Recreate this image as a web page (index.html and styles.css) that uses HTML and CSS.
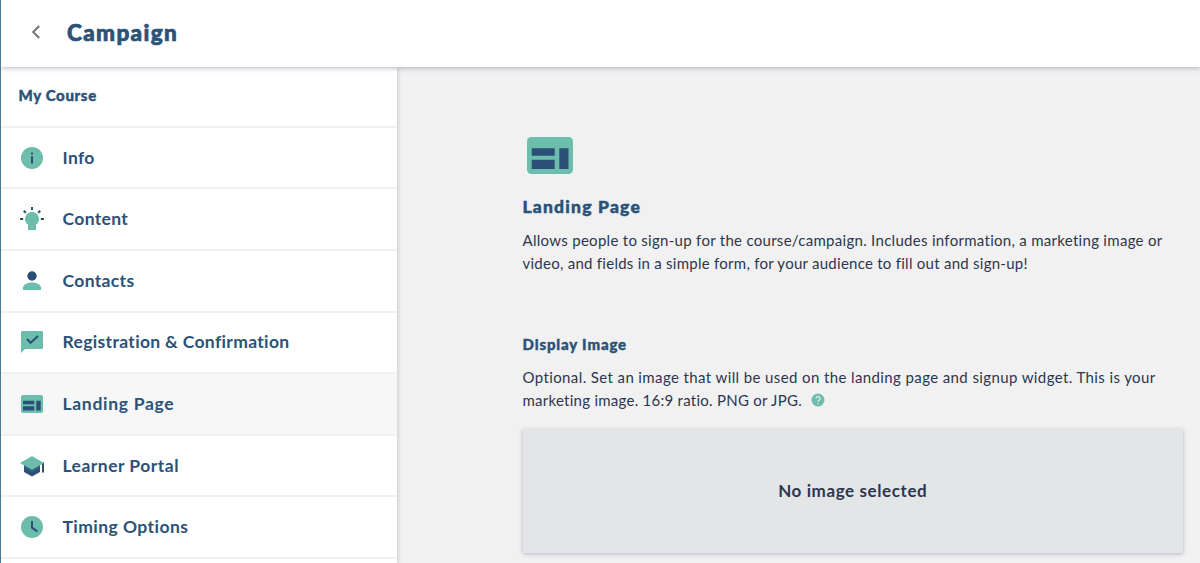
FILE: index.html
```html
<!DOCTYPE html>
<html lang="en">
<head>
    <meta charset="UTF-8">
    <meta name="viewport" content="width=device-width, initial-scale=1.0">
    <title>Campaign</title>
    <link rel="stylesheet" href="styles.css">
</head>
<body>
    <header class="header">
        <svg class="back" width="24" height="24" viewBox="0 0 24 24"><path d="M15.200 6 9.200 12l6 6" fill="none" stroke="#757575" stroke-width="2"/></svg>
        <h1 class="title">Campaign</h1>
    </header>

    <div class="layout">
        <!-- Side menu -->
        <nav class="sidebar">
            <div class="course">My Course</div>
            <a class="item">
                <svg class="icon" viewBox="0 0 24 24"><circle class="green" cx="12" cy="12" r="11"/><path class="blue" d="M11 6.500h2v2h-2zM11 10.200h2v7.300h-2z"/></svg>
                <span>Info</span>
            </a>
            <a class="item">
                <svg class="icon" viewBox="0 0 24 24"><path class="green" d="M12 5a7 7 0 0 0-4 12.700V23h8v-5.300A7 7 0 0 0 12 5z"/><path class="blue" d="M11 0h2v3h-2zM0 11h3.200v2H0zM20.800 11H24v2h-3.200zM3 4.400l1.500-1.500 2 2L5 6.400zM21 4.400l-1.500-1.500-2 2L19 6.400z"/></svg>
                <span>Content</span>
            </a>
            <a class="item">
                <svg class="icon" viewBox="0 0 24 24"><circle class="blue" cx="12" cy="7" r="4.700"/><path class="green" d="M3 21v-2.500c0-3 5-5 9-5s9 2 9 5V21z"/></svg>
                <span>Contacts</span>
            </a>
            <a class="item">
                <svg class="icon" viewBox="0 0 24 24"><path class="green" d="M2.500 1h19A1.500 1.500 0 0 1 23 2.500v15a1.500 1.500 0 0 1-1.500 1.500H5l-4 4V2.500A1.500 1.500 0 0 1 2.500 1z"/><path class="line" d="m7 9 3.600 3.800L18 6"/></svg>
                <span>Registration &amp; Confirmation</span>
            </a>
            <a class="item landing active">
                <svg class="icon" viewBox="0 0 24 24"><rect class="green" x="1" y="3" width="22" height="18" rx="2"/><path class="blue" d="M3 8.700h11.200v3.500H3zM3 14.300h11.200v4.200H3zM16.300 8.700h4.400v9.800h-4.400z"/></svg>
                <span>Landing Page</span>
            </a>
            <a class="item learner">
                <svg class="icon" viewBox="0 0 24 24"><path class="blue" d="M4 10v8l8 4.500 8-4.500V10zM22 8.500h2V18.500h-2z"/><path d="m4 13 8 4.500 8-4.500" fill="none" stroke="#6dbdad" stroke-width=".3"/><path class="green" d="M12 2 0 9l12 7 12-7z"/></svg>
                <span>Learner Portal</span>
            </a>
            <a class="item timing">
                <svg class="icon" viewBox="0 0 24 24"><circle class="green" cx="12" cy="12" r="11"/><path class="line" d="M12 6v6.700l5.300 3.600"/></svg>
                <span>Timing Options</span>
            </a>
        </nav>

        <main class="main">
            <svg class="main-icon" width="46" height="37" viewBox="0 0 46 37"><rect class="green" width="46" height="37" rx="4.500"/><path class="blue" d="M4.700 11.300h23v7.400h-23zM4.700 22.800h23v9.200h-23zM32.300 11.300h9.200V32h-9.200z"/></svg>
            <h2 class="heading">Landing Page</h2>
            <p class="text">
                <span class="intro-line">Allows people to sign-up for the course/campaign. Includes information, a marketing image or</span><br>
                <span>video, and fields in a simple form, for your audience to fill out and sign-up!</span>
            </p>
            <h3 class="subheading">Display Image</h3>
            <p class="text">
                <span class="image-line">Optional. Set an image that will be used on the landing page and signup widget. This is your</span><br>
                <span>marketing image. 16:9 ratio. PNG or JPG.</span>
                <svg class="help" width="14" height="14" viewBox="0 0 14 14"><circle class="green" cx="7" cy="7" r="6.500"/><path d="M5 5.500a2 2 0 1 1 3.100 1.700C7.300 7.700 7 8 7 8.800M7 9.900v1.200" fill="none" stroke="#f1f1f1" stroke-width="1.200"/></svg>
            </p>
            <div class="image-box"><span>No image selected</span></div>
        </main>
    </div>
</body>
</html>
```
FILE: styles.css
```css
* {
    margin: 0;
    padding: 0;
    box-sizing: border-box;
}

body {
    height: 563px;
    overflow: hidden;
    border-left: 1px solid #4b7b91;
    background-color: #f1f1f1;
    font-family: Lato, sans-serif;
    color: #2d3650;
    white-space: nowrap;
}

.green {
    fill: #6dbdad;
}

.blue {
    fill: #2b4f76;
}

.line {
    fill: none;
    stroke: #2b4f76;
    stroke-width: 2;
}

.header {
    position: relative;
    z-index: 2;
    display: flex;
    align-items: center;
    height: 67px;
    padding: 0 0 3px 23px;
    background-color: #fff;
    box-shadow: 0 1px 5px rgba(45, 54, 90, 0.35);
}

.title {
    margin-left: 19px;
    font-size: 22.5px;
    font-weight: 900;
    letter-spacing: 1.35px;
    color: #2b5278;
    -webkit-text-stroke: 0.7px #2b5278;
}

.layout {
    display: flex;
    height: 496px;
}

/* Side menu */
.sidebar {
    position: relative;
    z-index: 1;
    flex: none;
    width: 396px;
    background-color: #fff;
    box-shadow: 0 1px 5px rgba(45, 54, 90, 0.3);
}

.course {
    height: 60.8px;
    padding-left: 17.5px;
    border-bottom: 2px solid #f1f1f1;
    font-size: 15px;
    line-height: 57px;
    font-weight: 900;
    letter-spacing: 0.65px;
    color: #2b5278;
    -webkit-text-stroke: 0.4px #2b5278;
}

.item {
    display: flex;
    align-items: center;
    height: 61.6px;
    padding-left: 19px;
    border-bottom: 2px solid #f1f1f1;
    font-size: 17.5px;
    font-weight: 700;
    letter-spacing: 0.34px;
    color: #2b5278;
}

.item span {
    padding-bottom: 1px;
}

.item.active {
    background-color: #f7f7f7;
}

.landing {
    letter-spacing: 0.7px;
}

.learner {
    letter-spacing: 0.48px;
}

.timing {
    letter-spacing: 0.44px;
}

.icon {
    width: 24px;
    height: 24px;
    margin-right: 18.5px;
}

.main {
    flex: 1;
    padding: 70px 17px 0 125.5px;
}

.main-icon {
    display: block;
    margin-left: 4.5px;
}

.heading {
    margin-top: 21px;
    font-size: 17.5px;
    line-height: 24px;
    font-weight: 900;
    letter-spacing: 1.2px;
    color: #2b5278;
    -webkit-text-stroke: 0.5px #2b5278;
}

.text {
    margin-top: 10px;
    font-size: 15px;
    line-height: 23px;
    letter-spacing: 0.26px;
}

.intro-line {
    letter-spacing: 0.29px;
}

.subheading {
    margin-top: 59px;
    font-size: 15px;
    line-height: 20px;
    font-weight: 900;
    letter-spacing: 0.85px;
    color: #2b5278;
    -webkit-text-stroke: 0.4px #2b5278;
}

.subheading + .text {
    margin-top: 12px;
}

.image-line {
    letter-spacing: 0.39px;
}

.help {
    margin-left: 5px;
    vertical-align: -1px;
}

.image-box {
    display: flex;
    align-items: center;
    justify-content: center;
    height: 124px;
    margin-top: 17px;
    padding-bottom: 2px;
    background-color: #e4e5e7;
    box-shadow: 0 1px 4px rgba(45, 54, 90, 0.3);
    font-size: 17px;
    font-weight: 700;
    letter-spacing: 0.6px;
}
```
